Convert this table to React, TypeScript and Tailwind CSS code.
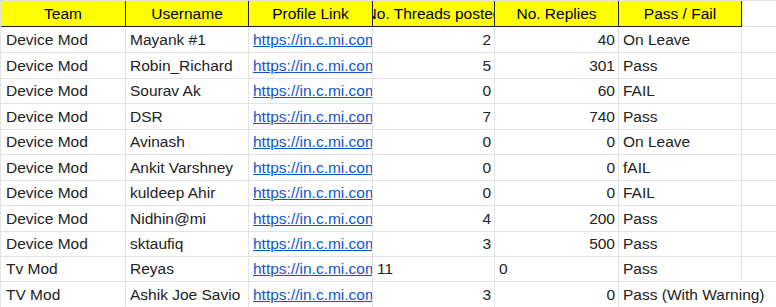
import React from "react";

type Row = {
  team: string;
  user: string;
  threads: string;
  threadsText?: boolean;
  replies: string;
  repliesText?: boolean;
  status: string;
  h: string;
};

const rows: Row[] = [
  { team: "Device Mod", user: "Mayank #1", threads: "2", replies: "40", status: "On Leave", h: "h-[26px]" },
  { team: "Device Mod", user: "Robin_Richard", threads: "5", replies: "301", status: "Pass", h: "h-[26px]" },
  { team: "Device Mod", user: "Sourav Ak", threads: "0", replies: "60", status: "FAIL", h: "h-[25px]" },
  { team: "Device Mod", user: "DSR", threads: "7", replies: "740", status: "Pass", h: "h-[26px]" },
  { team: "Device Mod", user: "Avinash", threads: "0", replies: "0", status: "On Leave", h: "h-[25px]" },
  { team: "Device Mod", user: "Ankit Varshney", threads: "0", replies: "0", status: "fAIL", h: "h-[26px]" },
  { team: "Device Mod", user: "kuldeep Ahir", threads: "0", replies: "0", status: "FAIL", h: "h-[25px]" },
  { team: "Device Mod", user: "Nidhin@mi", threads: "4", replies: "200", status: "Pass", h: "h-[26px]" },
  { team: "Device Mod", user: "sktaufiq", threads: "3", replies: "500", status: "Pass", h: "h-[25px]" },
  { team: "Tv Mod", user: "Reyas", threads: "11", threadsText: true, replies: "0", repliesText: true, status: "Pass", h: "h-[25px]" },
  { team: "TV Mod", user: "Ashik Joe Savio", threads: "3", replies: "0", status: "Pass (With Warning)", h: "h-[26px]" },
];

const cell =
  "flex items-end overflow-hidden whitespace-nowrap border-r border-b border-[#e2e3e3] pb-[3px] leading-[18px]";
const statusCell =
  "flex items-end overflow-visible whitespace-nowrap border-r border-b border-[#e2e3e3] pb-[3px] leading-[18px] pl-[4px]";
const head =
  "flex items-end justify-center overflow-hidden whitespace-nowrap border-r border-b border-[#1f1f1f] bg-[#ffff00] pb-[3px] leading-[18px] text-black";

export default function App() {
  return (
    <div className="w-[776px] h-[307px] overflow-hidden bg-white font-['Liberation_Sans',Arial,sans-serif] text-[15.5px] text-[#222222]">
      <div className="border-l border-t border-[#e2e3e3]">
        <div className="grid grid-cols-[125px_123px_124px_122px_124px_123px_1fr] h-[26px]">
          <div className={head}>Team</div>
          <div className={head}>Username</div>
          <div className={head}>Profile Link</div>
          <div className={head}>No. Threads posted</div>
          <div className={head}>No. Replies</div>
          <div className={head}>Pass / Fail</div>
          <div className="border-b border-[#e2e3e3]"></div>
        </div>
        {rows.map((r, i) => (
          <div
            key={i}
            className={`grid grid-cols-[125px_123px_124px_122px_124px_123px_1fr] ${r.h}`}
          >
            <div className={`${cell} pl-[5px]`}>{r.team}</div>
            <div className={`${cell} pl-[4px]`}>{r.user}</div>
            <div className={`${cell} pl-[4px]`}>
              <span className="text-[#1155cc] underline">https://in.c.mi.com/global/profile</span>
            </div>
            <div className={`${cell} ${r.threadsText ? "pl-[4px]" : "justify-end pr-[3px]"}`}>
              {r.threads}
            </div>
            <div className={`${cell} ${r.repliesText ? "pl-[4px]" : "justify-end pr-[3px]"}`}>
              {r.replies}
            </div>
            <div className={`${statusCell} ${i === rows.length - 1 ? "border-r-transparent" : ""}`}>
              <span className="relative z-10">{r.status}</span>
            </div>
            <div className="border-b border-[#e2e3e3]"></div>
          </div>
        ))}
      </div>
    </div>
  );
}
